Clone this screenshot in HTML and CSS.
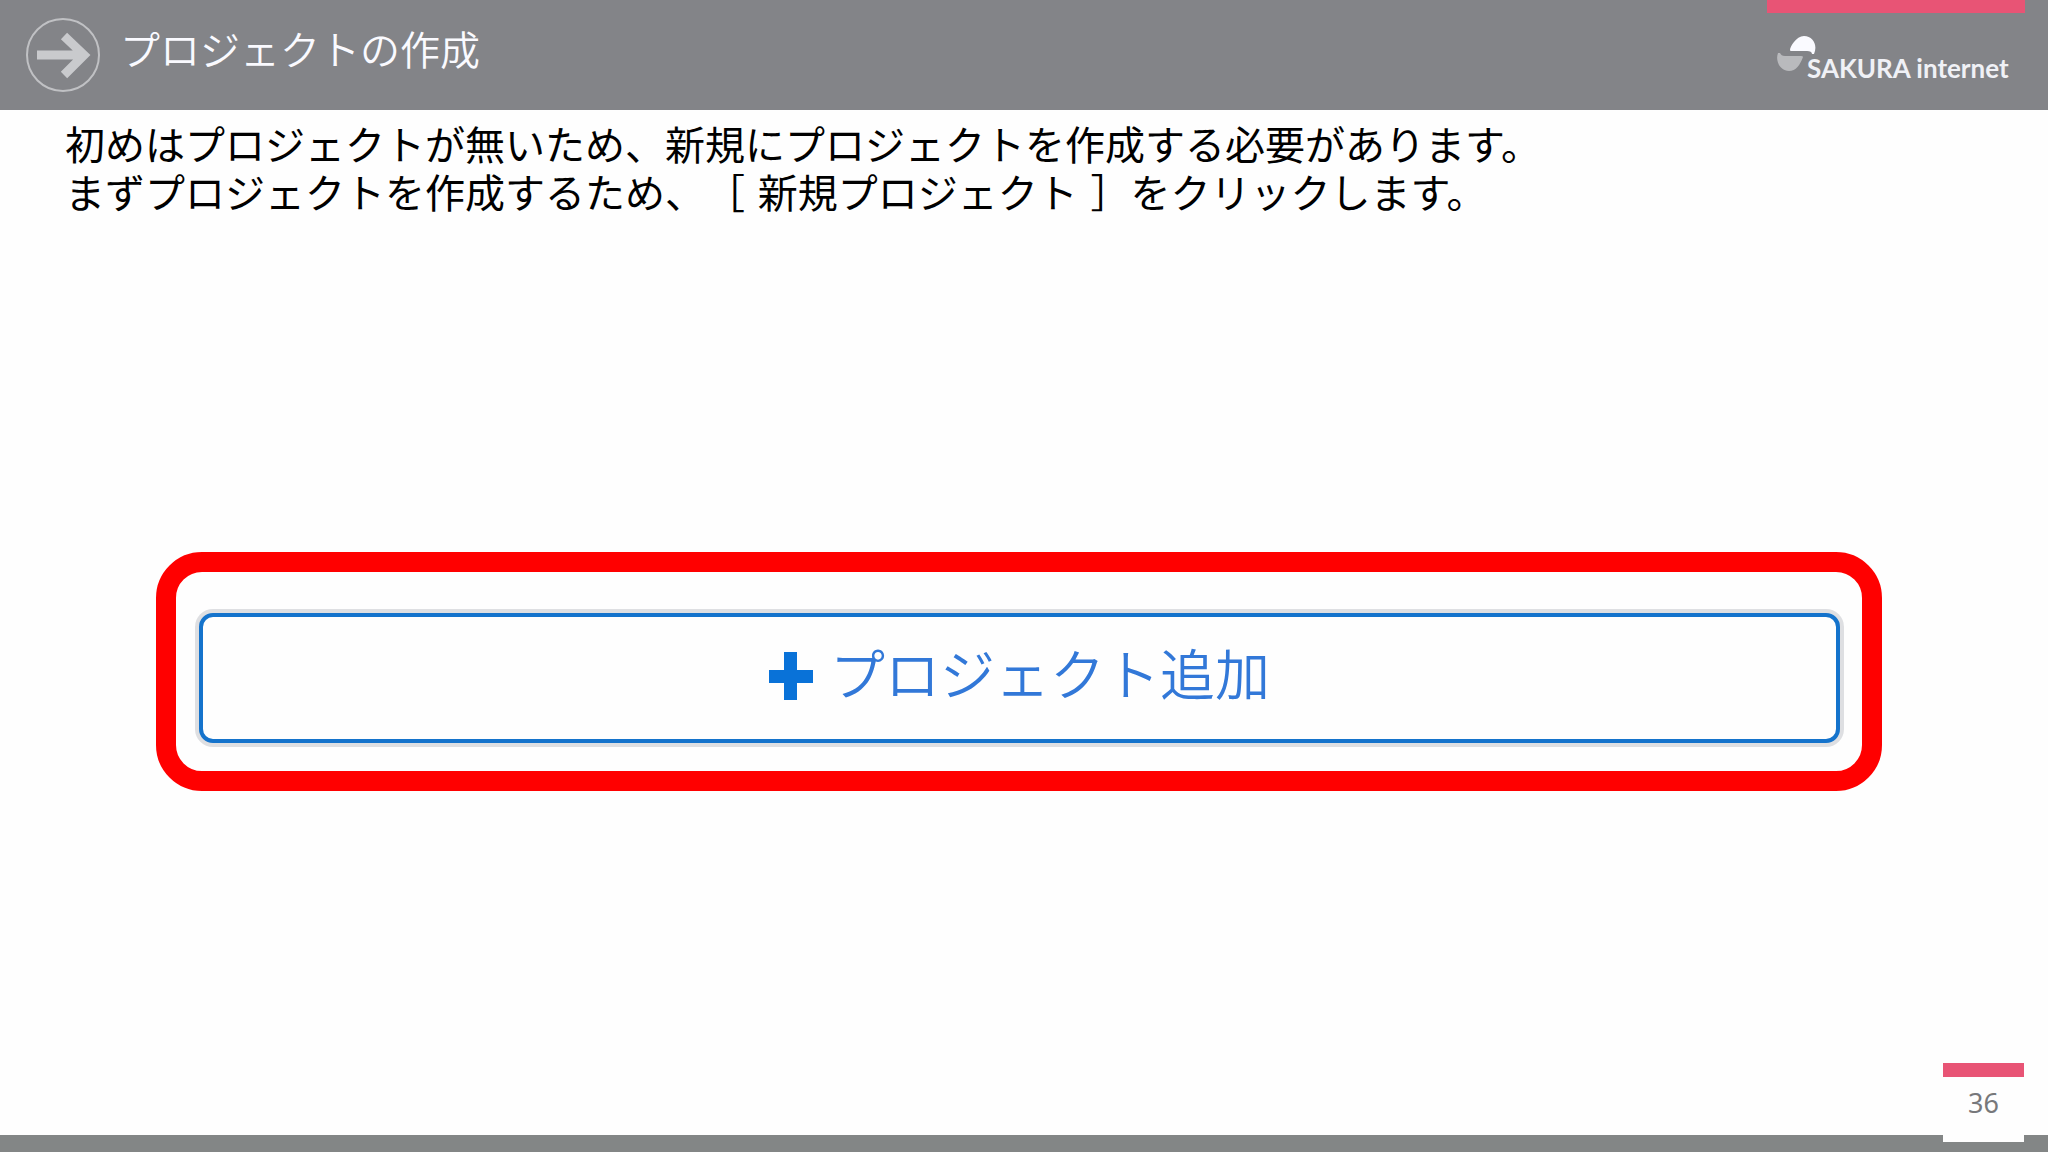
FILE: index.html
```html
<!DOCTYPE html>
<html lang="ja">
<head>
<meta charset="utf-8">
<title>プロジェクトの作成</title>
<link rel="stylesheet" href="styles.css">
</head>
<body>
<div class="slide">
  <header class="header">
    <svg class="arrow" viewBox="0 0 74 74" aria-hidden="true">
      <circle cx="37" cy="37" r="36" fill="none" stroke="#c0c1c4" stroke-width="2"/>
      <path d="M11 37H57M38 18L58 37L38 57" fill="none" stroke="#c9cacd" stroke-width="9"/>
    </svg>
    <h1 class="title">プロジェクトの作成</h1>
    <div class="brand">
      <svg class="mark" viewBox="0 0 40 36" aria-hidden="true">
        <path d="M13 14C13 11 19 0 27 0C36 0 41 9 37 18L35 18C35 16 33 15 30 15H14Q13 15 13 14Z" fill="#fafaff"/>
        <path d="M1 17H3C4 19 5 20 8 20H24Q26 20 26 21C23 29 19 35 12 35C3 35-2 25 1 17Z" fill="#b9babd"/>
      </svg>
      <span class="brand-name">SAKURA internet</span>
    </div>
  </header>
  <main class="content">
    <p class="lead">初めはプロジェクトが無いため、新規にプロジェクトを作成する必要があります。<br>まずプロジェクトを作成するため、［ 新規プロジェクト ］をクリックします。</p>
    <div class="highlight">
      <button class="add" type="button">
        <svg class="plus" viewBox="0 0 44 48" aria-hidden="true"><path d="M15 0H28V18H44V31H28V48H15V31H0V18H15Z" fill="#0972d8"/></svg>
        <span>プロジェクト追加</span>
      </button>
    </div>
  </main>
  <footer class="footer">
    <div class="page">36</div>
  </footer>
</div>
</body>
</html>
```
FILE: styles.css
```css
* { box-sizing: border-box; }

body {
  margin: 0;
  background: #fefefe;
  color: #000;
  font-family: "DejaVu Sans", "Noto Sans CJK JP", sans-serif;
  text-spacing-trim: space-all;
}

.slide {
  display: flex;
  flex-direction: column;
  min-height: 100vh;
}

.header {
  display: flex;
  align-items: flex-start;
  height: 110px;
  padding: 0 23px 0 26px;
  background: #838488;
}

.arrow {
  width: 74px;
  height: 74px;
  margin-top: 18px;
}

.title {
  margin: 21px 0 0 20px;
  color: #fafaff;
  font-size: 40px;
  font-weight: 350;
  line-height: 60px;
}

.brand {
  display: flex;
  align-items: flex-start;
  width: 258px;
  height: 84px;
  margin-left: auto;
  padding: 23px 0 0 10px;
  border-top: 13px solid #e85475;
}

.mark {
  width: 40px;
  height: 36px;
}

.brand-name {
  margin: 16px 0 0 -10px;
  color: #f0f1f6;
  font-family: Lato, sans-serif;
  font-size: 26px;
  font-weight: 700;
  line-height: 32px;
  white-space: nowrap;
}

.content {
  display: flex;
  flex: 1;
  flex-direction: column;
}

.lead {
  margin: 0;
  padding: 12px 65px 0;
  font-size: 40px;
  line-height: 48px;
}

.highlight {
  margin: 334px 166px 0 156px;
  padding: 41px 22px 28px 23px;
  border: 20px solid #f00;
  border-radius: 46px;
}

.add {
  display: flex;
  align-items: center;
  justify-content: center;
  gap: 17px;
  width: 100%;
  height: 130px;
  padding: 0 0 5px;
  border: 4px solid #1473cc;
  border-radius: 14px;
  background: #fefefe;
  box-shadow: 0 0 0 4px #dedfe2;
  color: #3278d8;
  font-family: inherit;
  font-size: 55px;
  font-weight: 350;
  line-height: 64px;
  text-spacing-trim: inherit;
}

.plus {
  width: 44px;
  height: 48px;
}

.footer {
  display: flex;
  justify-content: flex-end;
  padding: 0 24px 10px;
  background: linear-gradient(to top, #838686 17px, #fefefe 17px);
}

.page {
  width: 81px;
  height: 79px;
  padding-top: 8px;
  border-top: 14px solid #e85475;
  background: #fefefe;
  color: #77787b;
  font-family: "Noto Sans", sans-serif;
  font-size: 27px;
  line-height: 36px;
  text-align: center;
}
```
